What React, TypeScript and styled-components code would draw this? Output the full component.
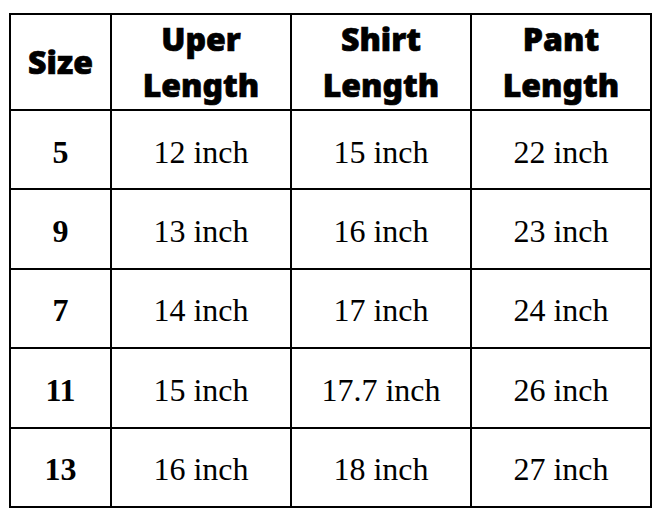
import React from "react";
import styled, { createGlobalStyle } from "styled-components";

const GlobalStyle = createGlobalStyle`
  html, body { margin: 0; padding: 0; background: #ffffff; }
`;

const Page = styled.div`
  padding: 13px 0 0 9px;
`;

const Table = styled.div`
  display: grid;
  grid-template-columns: 99px 178px 178px 178px;
  grid-template-rows: 94px repeat(5, 77.4px);
  gap: 2px;
  padding: 2px;
  width: max-content;
  background: #000000;
`;

const Cell = styled.div<{ $bold?: boolean }>`
  background: #ffffff;
  display: flex;
  align-items: center;
  justify-content: center;
  text-align: center;
  color: #000000;
  font-family: "Liberation Serif", "Times New Roman", serif;
  font-size: 32px;
  font-weight: ${(p) => (p.$bold ? 700 : 400)};
  line-height: 1;
  padding-top: 4px;
  box-sizing: border-box;
`;

const HeadCell = styled.div`
  background: #ffffff;
  display: flex;
  align-items: center;
  justify-content: center;
  text-align: center;
  color: #000000;
  font-family: "Noto Sans", "Liberation Sans", sans-serif;
  font-weight: 900;
  font-size: 32px;
  line-height: 46.5px;
  -webkit-text-stroke: 0.7px #000000;
`;

const headers = [["Size"], ["Uper", "Length"], ["Shirt", "Length"], ["Pant", "Length"]];

const rows = [
  ["5", "12 inch", "15 inch", "22 inch"],
  ["9", "13 inch", "16 inch", "23 inch"],
  ["7", "14 inch", "17 inch", "24 inch"],
  ["11", "15 inch", "17.7 inch", "26 inch"],
  ["13", "16 inch", "18 inch", "27 inch"],
];

export default function App() {
  return (
    <>
      <GlobalStyle />
      <Page>
        <Table>
          {headers.map((h, i) => (
            <HeadCell key={`h${i}`}>
              <div>
                {h.map((line, j) => (
                  <React.Fragment key={j}>
                    {j > 0 && <br />}
                    {line}
                  </React.Fragment>
                ))}
              </div>
            </HeadCell>
          ))}
          {rows.map((r, ri) =>
            r.map((v, ci) => (
              <Cell key={`${ri}-${ci}`} $bold={ci === 0}>
                {v}
              </Cell>
            ))
          )}
        </Table>
      </Page>
    </>
  );
}
